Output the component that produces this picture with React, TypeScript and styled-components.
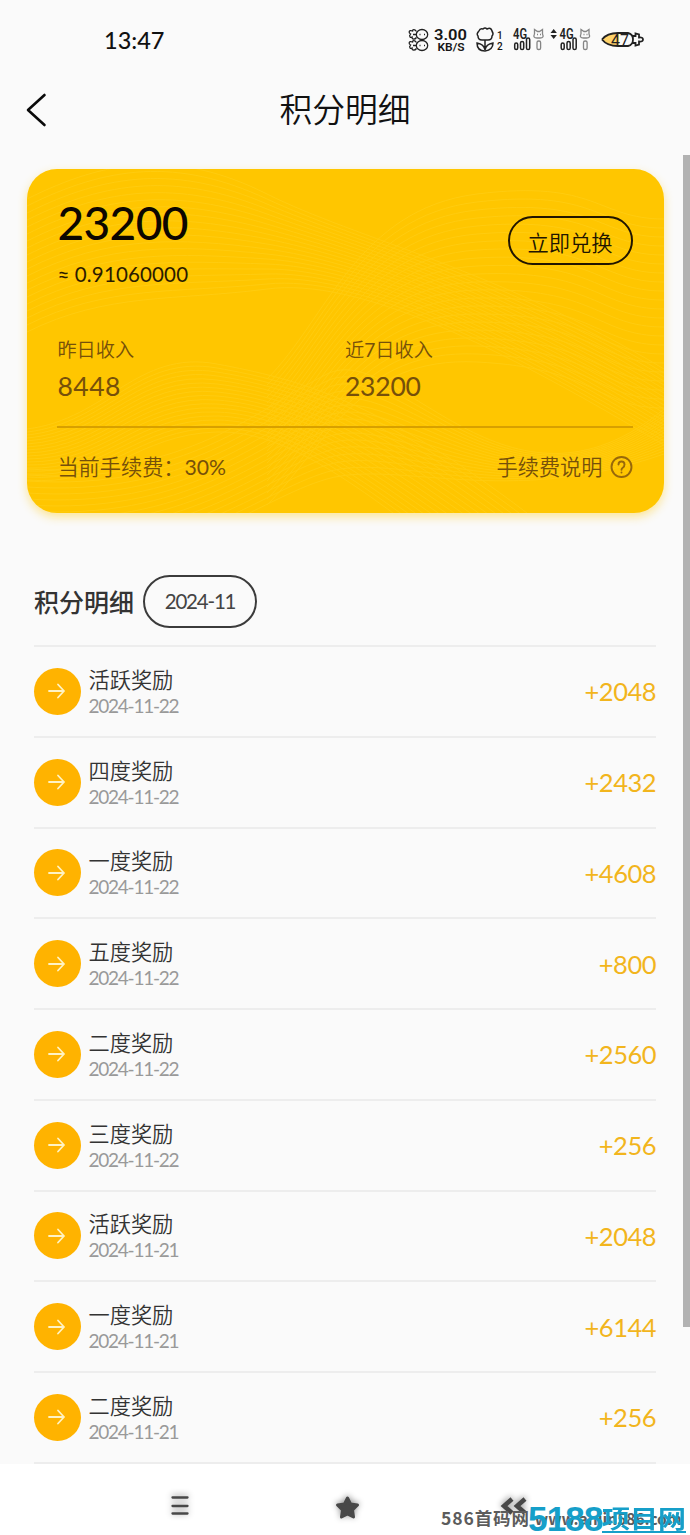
import React from "react";
import styled, { createGlobalStyle } from "styled-components";

const Global = createGlobalStyle`
  * { box-sizing: border-box; }
  body { margin: 0; background: #fafafa; }
`;

const Screen = styled.main`
  position: relative;
  width: 690px;
  height: 1535px;
  overflow: hidden;
  display: flex;
  flex-direction: column;
  background: #fafafa;
  color: #111;
  font-family: Lato, "Noto Sans CJK SC", sans-serif;
`;

const Label = styled.span<{ $size: number; $color?: string; $weight?: number; $gap?: number; $line?: number }>`
  display: block;
  white-space: nowrap;
  font-size: ${(p) => p.$size}px;
  line-height: ${(p) => p.$line ?? p.$size * 1.3}px;
  font-weight: ${(p) => p.$weight ?? 400};
  letter-spacing: ${(p) => p.$gap ?? 0}px;
  color: ${(p) => p.$color ?? "inherit"};
`;

const Digits = styled.span`
  font-weight: 400;
`;

const StatusBar = styled.div`
  height: 80px;
  padding: 0 45px 0 104px;
  display: flex;
  align-items: center;
  justify-content: space-between;
`;

const TitleBar = styled.header`
  height: 70px;
  padding: 0 26px;
  margin-top: -5px;
  display: grid;
  grid-template-columns: 40px 1fr 40px;
  align-items: center;
  justify-items: center;
`;

const BackIcon = styled.svg`
  justify-self: start;
`;

const Card = styled.section`
  margin: 24px 26.5px 0 26.5px;
  height: 344px;
  flex: none;
  border-radius: 30px;
  background: #ffc600;
  box-shadow: 0 4px 10px rgba(255, 204, 30, 0.45);
  overflow: hidden;
  display: grid;
`;

const Waves = styled.svg`
  grid-area: 1 / 1;
`;

const CardBody = styled.div`
  grid-area: 1 / 1;
  z-index: 1;
  padding: 0 31px 0 30.9px;
  display: flex;
  flex-direction: column;
`;

const Balance = styled.div`
  height: 154px;
  padding-top: 25px;
  display: flex;
  justify-content: space-between;
`;

const Redeem = styled.button`
  width: 125px;
  height: 49px;
  margin-top: 22px;
  padding: 1px 0 0;
  border: 2px solid #211500;
  border-radius: 25px;
  background: none;
  color: #211500;
  font: 350 21.3px Lato, "Noto Sans CJK SC", sans-serif;
`;

const Income = styled.div`
  height: 105px;
  padding-top: 13px;
  display: grid;
  grid-template-columns: 1fr 1fr;
  border-bottom: 2px solid #d8a000;
`;

const FeeRow = styled.div`
  height: 79px;
  display: flex;
  align-items: center;
  justify-content: space-between;
`;

const FeeHelp = styled.div`
  display: flex;
  align-items: center;
  gap: 7px;
`;

const Ledger = styled.section`
  padding: 62px 34px 0;
  flex: 1;
`;

const LedgerHead = styled.div`
  height: 70px;
  display: flex;
  align-items: flex-start;
  gap: 9px;
`;

const Month = styled.div`
  width: 114px;
  height: 53px;
  border: 2px solid #3b3b3b;
  border-radius: 27px;
  display: flex;
  align-items: center;
  justify-content: center;
`;

const Row = styled.div`
  height: 90.75px;
  border-top: 2px solid #ededed;
  display: flex;
  align-items: center;
  &:last-child { height: 92.5px; border-bottom: 2px solid #ededed; }
`;

const Badge = styled.div`
  width: 47px;
  height: 47px;
  margin-right: 7.5px;
  border-radius: 50%;
  background: #ffb300;
  display: grid;
  place-items: center;
`;

const RowText = styled.div`
  flex: 1;
  padding-top: 2px;
`;

const Amount = styled(Label)`
  padding-top: 1px;
`;

const NavBar = styled.nav`
  height: 71px;
  flex: none;
  background: #fff;
`;

const ScrollThumb = styled.div`
  position: absolute;
  left: 683px;
  top: 155px;
  width: 7px;
  height: 1172px;
  background: #b2b2b2;
`;

const SiteMark = styled.div`
  position: absolute;
  left: 441px;
  top: 1505px;
  white-space: nowrap;
  font: 700 17.5px/26px "Noto Sans CJK SC", sans-serif;
  letter-spacing: 0.9px;
  color: #5c5c5c;
`;

const SiteUrl = styled.span`
  font-size: 15.5px;
  letter-spacing: 0;
`;

const BrandMark = styled.div`
  position: absolute;
  left: 528px;
  top: 1500px;
  display: flex;
  align-items: center;
  height: 34px;
  color: #169fc9;
  white-space: nowrap;
`;

const BrandDigits = styled.span`
  width: 74px;
  font: 700 35px/34px "Liberation Sans", sans-serif;
  letter-spacing: -0.8px;
  transform: translateY(2px);
`;

const BrandName = styled.span`
  font: 700 28px/30px "Noto Sans CJK SC", sans-serif;
  transform: scaleY(0.88);
`;

const BrandRule = styled.div`
  position: absolute;
  left: 602px;
  top: 1531px;
  width: 84px;
  height: 2px;
  background: #169fc9;
`;

function range(n: number) {
  return Array.from({ length: n }, (_, i) => i);
}

function WaveLines() {
  return (
    <Waves width="637" height="344" viewBox="0 0 637 344" fill="none" stroke="#ffd424" strokeWidth="1" opacity=".42">
      {range(20).map((i) => (
        <path key={`a${i}`} d={`M0 ${30 + i * 7} C80 ${-10 + i * 7} 150 ${-20 + i * 8} 240 ${25 + i * 5} S470 ${100 + i * 4} 637 ${200 + i * 4}`} />
      ))}
      {range(18).map((i) => (
        <path key={`b${i}`} d={`M0 ${260 + i * 3} C80 ${250 + i * 4} 110 ${180 + i * 5} 190 ${195 + i * 4} S350 ${230 + i * 6} 500 ${344 + i * 6}`} />
      ))}
      {range(22).map((i) => (
        <path key={`c${i}`} d={`M240 ${210 + i * 6} C300 ${150 + i * 6} 330 ${40 + i * 7} 450 ${25 + i * 8} S570 ${50 + i * 9} 637 ${50 + i * 9}`} />
      ))}
      {range(16).map((i) => (
        <path key={`d${i}`} d={`M0 ${300 + i * 6} C160 ${310 + i * 6} 230 ${240 + i * 6} 300 ${205 + i * 7} S480 ${370 - i * 2} 637 ${240 + i * 3}`} />
      ))}
    </Waves>
  );
}

function StatusIcons() {
  return (
    <svg width="242" height="34" viewBox="403 23 242 34" fill="none" stroke="#222" strokeWidth="1.5" fontFamily="Roboto, sans-serif">
      {[34.5, 45.5].map((y) => (
        <g key={y} strokeWidth="1.3">
          <ellipse cx="422" cy={y} rx="5.7" ry="5" />
          <path d={`M416.500 ${y - 3}c-2-3-4-2-4-0.500-4-1.500-4 2-2 3-2 2.500 0 4 1.500 3 0 3 3 2.500 4.500 0.500M413 ${y}h3M419.500 ${y}h1m3.500 0h1`} />
        </g>
      ))}
      <g fill="#151515" stroke="none" fontWeight="700">
        <text x="434" y="39.500" fontSize="15.5" fontWeight="600" textLength="33" lengthAdjust="spacingAndGlyphs">3.00</text>
        <text x="437.5" y="51" fontSize="11.5" fontWeight="600" textLength="27" lengthAdjust="spacingAndGlyphs">KB/S</text>
        <text x="497" y="38.500" fontSize="10" fontWeight="500">1</text>
        <text x="497" y="49.500" fontSize="10" fontWeight="500">2</text>
      </g>
      <path d="M479 31q1-3 4-2 2-2 4 0 4-2 5 2 2 3 0 5 0 4-4 4h-6q-4 0-4-4-2-2 1-5M485 40v10M485 50q-1-6-8-7 0 8 8 8 8-1 8-8-7 1-8 7" />
      {[513, 559.5].map((x) => (
        <g key={x}>
          <text x={x} y="39" fill="#222" stroke="none" fontWeight="600" fontSize="14" textLength="14" lengthAdjust="spacingAndGlyphs">4G</text>
          <rect x={x + 1.7} y="43" width="3" height="6.5" rx="1.5" />
          <rect x={x + 7.5} y="41.500" width="3.2" height="8" rx="1.6" />
          <rect x={x + 13.5} y="38" width="3.2" height="11.500" rx="1.6" />
          <g stroke="#858585" strokeWidth="1.3">
            <path d={`M${x + 21.5} 34l0-4.500 3 2h2l3-2 0 4.500q2 4-2.500 4h-3q-4.500 0-2.500-4m2.500 0.500h1m2 0h1`} />
            <rect x={x + 24} y="41" width="3.6" height="8.500" rx="1.6" />
          </g>
        </g>
      ))}
      <path d="M550.5 33l3.2-4 3.2 4zM550.5 35l3.2 4 3.2-4z" fill="#222" stroke="none" />
      <path d="M602 39.500q7-7 17-6v13q-10 1-17-7" fill="#ffd36a" stroke="none" />
      <path d="M602 39.500q5-6.500 16-6.500h10q5 1 5 6.500t-5 6.500h-10q-11 0-16-6.500M632 36h3.500v-2.500l3.500 1v3q4-0.500 4 2t-4 2v3l-3.500 1v-2.500h-3.500" strokeWidth="1.8" />
      <text x="611" y="45.500" fill="#222" stroke="none" fontSize="17" textLength="18" lengthAdjust="spacingAndGlyphs">47</text>
    </svg>
  );
}

const NavIcons = styled.svg`
  display: block;
  filter: drop-shadow(0 -1px 3px rgba(0, 0, 0, 0.45));
`;

const entries = [
  ["活跃奖励", "2024-11-22", "+2048"],
  ["四度奖励", "2024-11-22", "+2432"],
  ["一度奖励", "2024-11-22", "+4608"],
  ["五度奖励", "2024-11-22", "+800"],
  ["二度奖励", "2024-11-22", "+2560"],
  ["三度奖励", "2024-11-22", "+256"],
  ["活跃奖励", "2024-11-21", "+2048"],
  ["一度奖励", "2024-11-21", "+6144"],
  ["二度奖励", "2024-11-21", "+256"],
];

const brown = "#76500a";

export default function App() {
  return (
    <Screen>
      <Global />
      <StatusBar>
        <Label $size={23.5} $weight={500}>13:47</Label>
        <StatusIcons />
      </StatusBar>
      <TitleBar>
        <BackIcon width="22" height="36" viewBox="0 0 22 36" fill="none" stroke="#0a0a0a" strokeWidth="2.6" strokeLinecap="round" strokeLinejoin="round">
          <path d="M18.5 3L2 18l16.500 15" />
        </BackIcon>
        <Label $size={32.8} $weight={350} $line={40}>积分明细</Label>
      </TitleBar>
      <Card>
        <WaveLines />
        <CardBody>
          <Balance>
            <div>
              <Label $size={46} $weight={500} $line={58} $gap={-0.6} $color="#0d0700">23200</Label>
              <Label $size={20.5} $line={44} $gap={0.15} $color="#2b1b00">≈ 0.91060000</Label>
            </div>
            <Redeem>立即兑换</Redeem>
          </Balance>
          <Income>
            <div>
              <Label $size={19.2} $weight={350} $line={28} $color={brown}>昨日收入</Label>
              <Label $size={26.5} $line={45} $gap={0.5} $color={brown}>8448</Label>
            </div>
            <div>
              <Label $size={19.2} $weight={350} $line={28} $color={brown}>近<Digits>7</Digits>日收入</Label>
              <Label $size={26.5} $line={45} $gap={-0.2} $color={brown}>23200</Label>
            </div>
          </Income>
          <FeeRow>
            <Label $size={21.2} $weight={350} $color={brown}>当前手续费：<Digits>30%</Digits></Label>
            <FeeHelp>
              <Label $size={21.2} $weight={350} $color={brown}>手续费说明</Label>
              <svg width="23" height="24" viewBox="0 0 23 24" fill="none" stroke="#98690a" strokeWidth="1.9" strokeLinecap="round">
                <circle cx="11.500" cy="11" r="10" />
                <path d="M8.500 8.500q0-3 3-3t3 3q0 1.800-1.500 3-1.500 1-1.500 2.300M11.500 16.500v.1" />
              </svg>
            </FeeHelp>
          </FeeRow>
        </CardBody>
      </Card>
      <Ledger>
        <LedgerHead>
          <Label $size={25} $weight={500} $line={54} $color="#333">积分明细</Label>
          <Month><Label $size={20.5} $gap={-1.2} $line={31} $color="#444">2024-11</Label></Month>
        </LedgerHead>
        {entries.map(([name, date, amount], i) => (
          <Row key={i}>
            <Badge>
              <svg width="20" height="18" viewBox="0 0 20 18" fill="none" stroke="#fff3c4" strokeWidth="1.8" strokeLinecap="round" strokeLinejoin="round">
                <path d="M1 9h15M10 2.500L16 9l-6 6.500" />
              </svg>
            </Badge>
            <RowText>
              <Label $size={21.2} $weight={350} $line={26} $color="#333">{name}</Label>
              <Label $size={19} $line={25} $gap={-1.25} $color="#999">{date}</Label>
            </RowText>
            <Amount $size={25.5} $gap={-0.5} $color="#f2b51d">{amount}</Amount>
          </Row>
        ))}
      </Ledger>
      <NavBar>
        <NavIcons width="690" height="71" viewBox="0 1464 690 71" fill="none" stroke="#484848" strokeLinecap="round" strokeLinejoin="round">
          <path d="M172.500 1497.500h15M172.500 1506h15M172.500 1513.500h15" strokeWidth="2.3" />
          <path d="M347.500 1498l3 6 7 1-5 5 1 7-6-3-6 3 1-7-5-5 7-1z" fill="#484848" strokeWidth="3" />
          <path d="M512 1499l-8 7 8 7M525 1499l-8 7 8 7" strokeWidth="4.5" strokeLinecap="butt" strokeLinejoin="miter" />
        </NavIcons>
      </NavBar>
      <ScrollThumb />
      <SiteMark>586首码网 <SiteUrl>www.anjin586.com</SiteUrl></SiteMark>
      <BrandMark>
        <BrandDigits>5188</BrandDigits>
        <BrandName>项目网</BrandName>
      </BrandMark>
      <BrandRule />
    </Screen>
  );
}
